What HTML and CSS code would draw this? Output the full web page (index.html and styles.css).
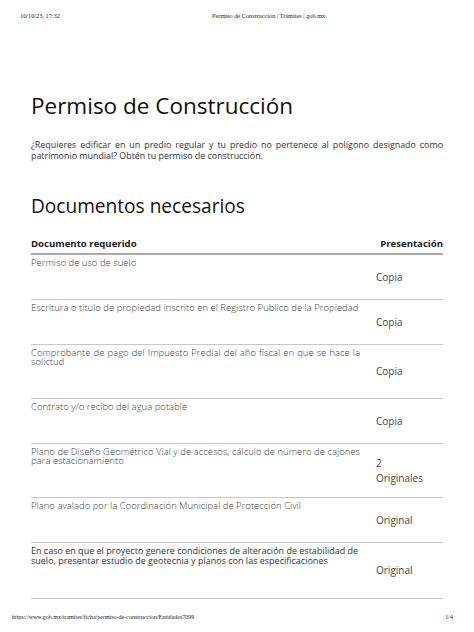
FILE: index.html
```html
<!DOCTYPE html>
<html lang="es">
<head>
<meta charset="utf-8">
<title>Permiso de Construcción | Trámites | gob.mx</title>
<link rel="stylesheet" href="styles.css">
</head>
<body>
<div class="page">
  <header class="print-head">
    <span class="print-date">10/10/23, 17:32</span>
    <span class="print-title">Permiso de Construcción | Trámites | gob.mx</span>
  </header>
  <main class="content">
    <h1 class="title">Permiso de Construcción</h1>
    <p class="intro">¿Requieres edificar en un predio regular y tu predio no pertenece al polígono designado como patrimonio mundial? Obtén tu permiso de construcción.</p>
    <h2 class="subtitle">Documentos necesarios</h2>
    <table class="docs">
      <thead>
        <tr>
          <th class="col-doc">Documento requerido</th>
          <th class="col-pres">Presentación</th>
        </tr>
      </thead>
      <tbody>
        <tr>
          <td class="doc">Permiso de uso de suelo</td>
          <td class="pres">Copia</td>
        </tr>
        <tr>
          <td class="doc">Escritura o titulo de propiedad inscrito en el Registro Publico de la Propiedad</td>
          <td class="pres">Copia</td>
        </tr>
        <tr>
          <td class="doc">Comprobante de pago del Impuesto Predial del año fiscal en que se hace la solictud</td>
          <td class="pres">Copia</td>
        </tr>
        <tr>
          <td class="doc">Contrato y/o recibo del agua potable</td>
          <td class="pres">Copia</td>
        </tr>
        <tr>
          <td class="doc">Plano de Diseño Geométrico Vial y de accesos, cálculo de número de cajones para estacionamiento</td>
          <td class="pres">2<br>Originales</td>
        </tr>
        <tr>
          <td class="doc">Plano avalado por la Coordinación Municipal de Protección Civil</td>
          <td class="pres">Original</td>
        </tr>
        <tr>
          <td class="doc doc-large">En caso en que el proyecto genere condiciones de alteración de estabilidad de suelo, presentar estudio de geotecnia y planos con las especificaciones</td>
          <td class="pres">Original</td>
        </tr>
      </tbody>
    </table>
  </main>
  <footer class="print-foot">
    <span class="print-url">https://www.gob.mx/tramites/ficha/permiso-de-construccion/Entidades7099</span>
    <span class="print-page">1/4</span>
  </footer>
</div>
</body>
</html>
```

FILE: styles.css
```css
* { box-sizing: border-box; }

html, body {
  margin: 0;
  padding: 0;
  background: #ffffff;
}

.page {
  width: 474px;
  height: 632px;
  display: flex;
  flex-direction: column;
  font-family: "Open Sans", "Noto Sans", sans-serif;
  color: #333;
  overflow: hidden;
}

.print-head {
  height: 30px;
  display: flex;
  align-items: center;
  padding-left: 20px;
  font-family: "Liberation Serif", serif;
  font-size: 6.3px;
  color: #222;
}

.print-date { width: 192px; }

.content {
  flex: 1;
  padding: 0 31px;
}

.title {
  margin: 64px 0 0;
  font-size: 22.5px;
  line-height: 24px;
  font-weight: 400;
  color: #111;
}

.intro {
  margin: 21px 0 0;
  font-size: 8.9px;
  line-height: 11px;
  text-align: justify;
  color: #333;
}

.subtitle {
  margin: 35px 0 0;
  font-size: 19.1px;
  line-height: 20px;
  font-weight: 400;
  color: #111;
}

.docs {
  margin-top: 22px;
  width: 412px;
  border-collapse: collapse;
}

.docs th {
  font-size: 9.6px;
  line-height: 12px;
  font-weight: 700;
  color: #1a1a1a;
  padding: 0 0 3px;
  border-bottom: 2px solid #a9a9a9;
}

.col-doc { text-align: left; width: 345px; }
.col-pres { text-align: right; }

.docs td {
  border-bottom: 1px solid #c8c8c8;
}

.doc {
  width: 345px;
  padding: 3px 16px 32px 0;
  font-size: 9.5px;
  line-height: 9px;
  font-weight: 300;
  color: #3c3c3c;
  text-align: justify;
  vertical-align: top;
}

.doc-large {
  font-size: 9px;
  line-height: 10px;
  font-weight: 400;
  color: #333;
  text-align: left;
}

.pres {
  padding: 0;
  font-size: 10px;
  line-height: 15px;
  color: #444;
  vertical-align: middle;
}

.print-foot {
  height: 30px;
  display: flex;
  justify-content: space-between;
  align-items: flex-start;
  padding: 12px 21px 0 12px;
  font-family: "Liberation Serif", serif;
  font-size: 6px;
  color: #222;
}
```
